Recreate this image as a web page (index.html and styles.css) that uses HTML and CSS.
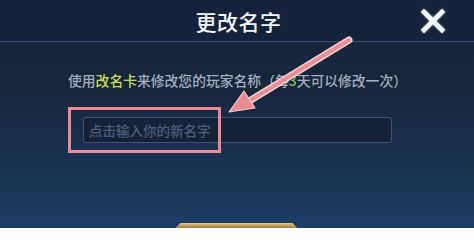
FILE: index.html
```html
<!DOCTYPE html>
<html lang="zh">
<head>
<meta charset="utf-8">
<title>更改名字</title>
<link rel="stylesheet" href="styles.css">
</head>
<body>
<div class="dialog">
  <svg class="ornament" width="474" height="42" viewBox="0 0 474 42" aria-hidden="true">
    <g fill="none" stroke="#5d8fc0" stroke-width="1.3">
      <path d="M75 1 H112"/>
      <path d="M77 2 Q100 28 130 40 L150 41"/>
      <path d="M90 1 Q108 22 140 38"/>
      <path d="M95 31 L100 29 L104 33"/>
      <path d="M129 34 L133 31 L138 35"/>
      <path d="M365 2 H397"/>
      <path d="M397 1 Q375 22 346 40"/>
      <path d="M380 4 Q362 24 333 38"/>
      <path d="M336 34 L340 31 L344 34"/>
      <path d="M370 29 L372 33"/>
    </g>
  </svg>
  <header class="header">
    <span></span>
    <h1 class="title">更改名字</h1>
    <button class="close" aria-label="关闭">
      <svg width="24" height="24" viewBox="0 0 24 24">
        <path d="M3 3 L21 21 M21 3 L3 21" stroke="#f4f8fc" stroke-width="4.6" stroke-linecap="square"/>
      </svg>
    </button>
  </header>
  <main class="content">
    <p class="hint">使用<span class="card">改名卡</span>来修改您的玩家名称（每<span class="num">3</span>天可以修改一次）</p>
    <input class="name-input" type="text" placeholder="点击输入你的新名字">
  </main>
  <footer class="footer">
    <button class="confirm" aria-label="确定"></button>
  </footer>
  <div class="highlight"></div>
  <svg class="arrow" width="474" height="228" viewBox="0 0 474 228" aria-hidden="true">
    <line x1="349" y1="40" x2="246" y2="103" stroke="#f6d3d5" stroke-width="7" stroke-linecap="round"/>
    <line x1="349" y1="40" x2="246" y2="103" stroke="#e88f97" stroke-width="4" stroke-linecap="round"/>
    <polygon points="229,112 244,91 255,108" fill="#ea8c94" stroke="#f4c9cc" stroke-width="1.2" stroke-linejoin="round"/>
  </svg>
</div>
</body>
</html>
```
FILE: styles.css
```css
html, body {
  margin: 0;
  padding: 0;
}
body {
  width: 474px;
  height: 228px;
  overflow: hidden;
  font-family: "Noto Sans CJK SC", "Noto Sans", sans-serif;
}
.dialog {
  position: relative;
  width: 474px;
  height: 228px;
  overflow: hidden;
  background: linear-gradient(180deg, #172439 0%, #18263c 40%, #1a3150 68%, #1c3e66 100%);
}
.ornament {
  position: absolute;
  left: 0;
  top: 0;
  pointer-events: none;
  opacity: 0.8;
}
.header {
  position: relative;
  height: 41px;
  border-bottom: 1px solid #34506f;
  background: #15223a;
  display: grid;
  grid-template-columns: 1fr auto 1fr;
  align-items: center;
}
.title {
  margin: 0;
  font-size: 21px;
  font-weight: 500;
  letter-spacing: 0.5px;
  color: #f2f5f9;
  line-height: 24px;
  padding: 1px 0 0 3px;
}
.close {
  justify-self: end;
  margin-right: 29px;
  padding: 0;
  border: 0;
  background: none;
  width: 24px;
  height: 24px;
  display: flex;
  filter: drop-shadow(0 0 1px rgba(220, 235, 255, 0.7));
}
.content {
  display: flex;
  flex-direction: column;
  align-items: flex-start;
  padding: 30px 0 0 68px;
}
.hint {
  margin: 0;
  font-size: 13.8px;
  font-weight: 500;
  line-height: 16px;
  color: #a3aebf;
  white-space: nowrap;
}
.card {
  color: #cadb55;
}
.num {
  color: #7cc64e;
}
.name-input {
  box-sizing: border-box;
  margin: 29px 0 0 15px;
  width: 309px;
  height: 26px;
  padding: 0 0 0 5px;
  border: 1px solid #3c5270;
  border-radius: 2px;
  background: #162238;
  font-family: inherit;
  font-size: 13.5px;
  font-weight: 500;
  color: #c9d3df;
  outline: none;
}
.name-input::placeholder {
  color: #4c5d77;
}
.footer {
  display: flex;
  justify-content: center;
  padding-top: 80px;
  margin-left: -1px;
}
.confirm {
  width: 122px;
  height: 34px;
  border: 0;
  padding: 0;
  background: linear-gradient(180deg, #e2cd92 0px, #c6a864 2px, #9b7d45 5px, #7d6235 100%);
  clip-path: polygon(5px 0, calc(100% - 5px) 0, 100% 5px, 100% 100%, 0 100%, 0 5px);
}
.highlight {
  position: absolute;
  left: 68px;
  top: 107px;
  width: 153px;
  height: 46px;
  box-sizing: border-box;
  border: 3px solid #e98a94;
  pointer-events: none;
}
.arrow {
  position: absolute;
  left: 0;
  top: 0;
  pointer-events: none;
}
```
